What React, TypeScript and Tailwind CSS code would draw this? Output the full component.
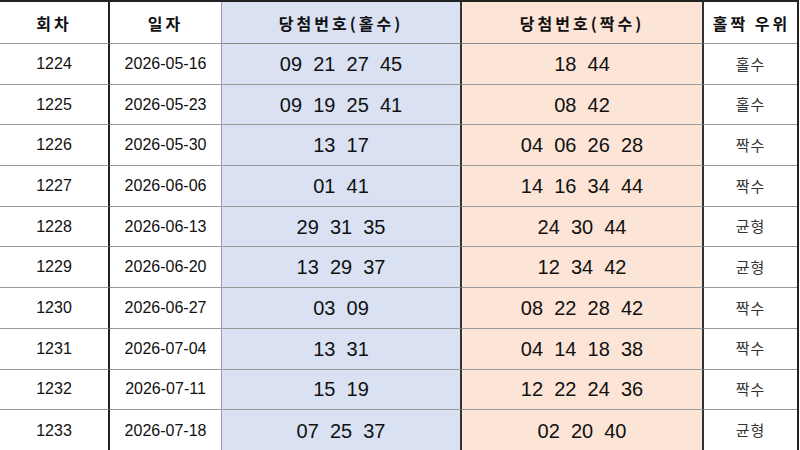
import React from 'react'

type Row = {
  round: number
  date: string
  odd: string[]
  even: string[]
  result: string
}

const rows: Row[] = [
  { round: 1224, date: '2026-05-16', odd: ['09', '21', '27', '45'], even: ['18', '44'], result: '홀수' },
  { round: 1225, date: '2026-05-23', odd: ['09', '19', '25', '41'], even: ['08', '42'], result: '홀수' },
  { round: 1226, date: '2026-05-30', odd: ['13', '17'], even: ['04', '06', '26', '28'], result: '짝수' },
  { round: 1227, date: '2026-06-06', odd: ['01', '41'], even: ['14', '16', '34', '44'], result: '짝수' },
  { round: 1228, date: '2026-06-13', odd: ['29', '31', '35'], even: ['24', '30', '44'], result: '균형' },
  { round: 1229, date: '2026-06-20', odd: ['13', '29', '37'], even: ['12', '34', '42'], result: '균형' },
  { round: 1230, date: '2026-06-27', odd: ['03', '09'], even: ['08', '22', '28', '42'], result: '짝수' },
  { round: 1231, date: '2026-07-04', odd: ['13', '31'], even: ['04', '14', '18', '38'], result: '짝수' },
  { round: 1232, date: '2026-07-11', odd: ['15', '19'], even: ['12', '22', '24', '36'], result: '짝수' },
  { round: 1233, date: '2026-07-18', odd: ['07', '25', '37'], even: ['02', '20', '40'], result: '균형' },
]

const kr = "font-['Noto_Sans_CJK_KR',sans-serif]"
const num = "font-['Liberation_Sans',Arial,sans-serif]"

export default function App() {
  return (
    <div className="w-[800px] h-[450px] bg-white overflow-hidden">
      <div className="grid grid-cols-[110px_112px_240px_242px_93px] grid-rows-[42px_repeat(10,40.7px)] border-t-2 border-b-2 border-r-2 border-[#222] w-[799px] text-[#111]">
        {/* header */}
        <div className={`${kr} flex items-center justify-center border-r-2 border-r-[#222] border-b border-b-[#9a9a9a] text-[16px] font-bold tracking-[3px]`}>회차</div>
        <div className={`${kr} flex items-center justify-center border-r border-r-[#9a9aa8] border-b border-b-[#9a9a9a] text-[16px] font-bold tracking-[3px]`}>일자</div>
        <div className={`${kr} flex items-center justify-center bg-[#d9e1f2] border-r-2 border-r-[#333] border-b border-b-[#8a8a8a] text-[16px] font-bold tracking-[3px]`}>당첨번호(홀수)</div>
        <div className={`${kr} flex items-center justify-center bg-[#fce4d6] border-r-2 border-r-[#333] border-b border-b-[#8a8a8a] text-[16px] font-bold tracking-[3px]`}>당첨번호(짝수)</div>
        <div className={`${kr} flex items-center justify-center border-b border-b-[#9a9a9a] text-[16px] font-bold tracking-[3px] pl-[2px]`}>홀짝 우위</div>

        {rows.map((r, i) => {
          const last = i === rows.length - 1
          const bb = last ? '' : 'border-b border-b-[#9a9a9a]'
          return (
            <React.Fragment key={r.round}>
              <div className={`${num} flex items-center justify-center border-r-2 border-r-[#222] ${bb} text-[16px]`}>{r.round}</div>
              <div className={`${num} flex items-center justify-center border-r border-r-[#9a9aa8] ${bb} text-[16px]`}>{r.date}</div>
              <div className={`${num} flex items-center justify-center bg-[#d9e1f2] border-r-2 border-r-[#333] ${bb} text-[20px] whitespace-pre`}>{r.odd.join('  ')}</div>
              <div className={`${num} flex items-center justify-center bg-[#fce4d6] border-r-2 border-r-[#333] ${bb} text-[20px] whitespace-pre`}>{r.even.join('  ')}</div>
              <div className={`${kr} flex items-center justify-center ${bb} text-[15px] text-[#333] tracking-[1px]`}>{r.result}</div>
            </React.Fragment>
          )
        })}
      </div>
    </div>
  )
}
